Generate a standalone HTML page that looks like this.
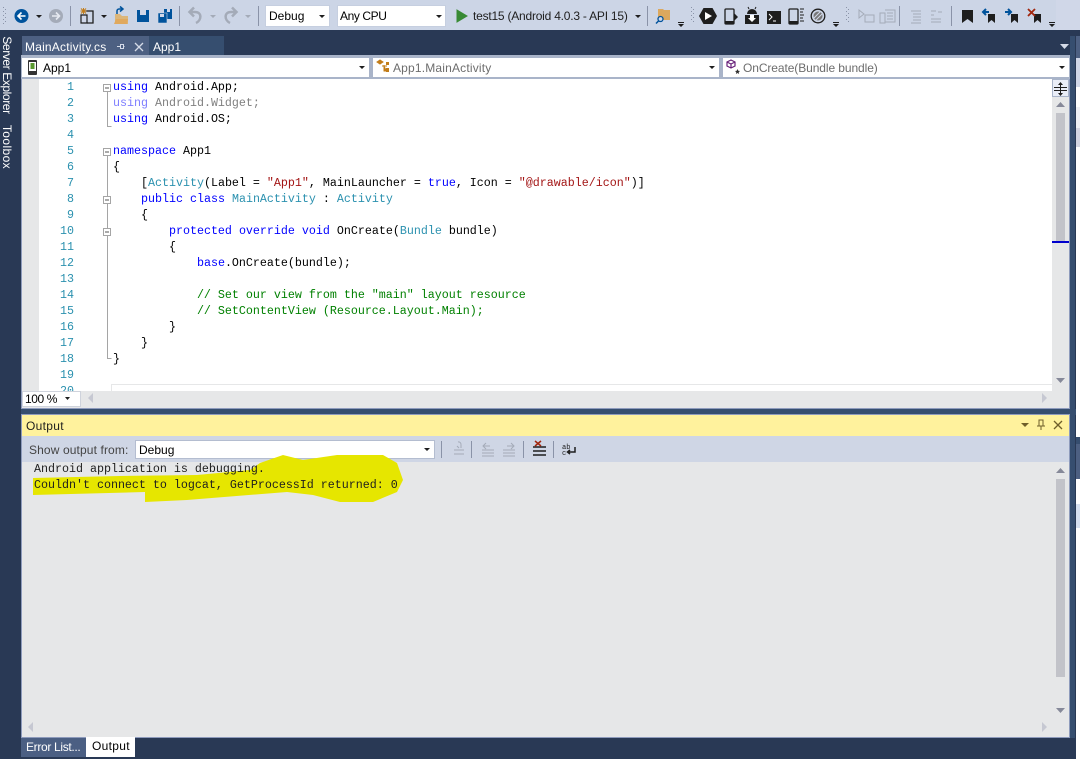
<!DOCTYPE html>
<html><head><meta charset="utf-8"><style>
html,body{margin:0;padding:0;width:1080px;height:759px;overflow:hidden;background:#293955}
*{box-sizing:border-box}
.a{position:absolute}
.t{position:absolute;font:12px/16px "Liberation Sans",sans-serif;color:#1e1e1e;white-space:pre}
.c{position:absolute;left:113px;font:11.67px/16px "Liberation Mono",monospace;color:#000;white-space:pre}
.n{position:absolute;left:40px;width:34px;text-align:right;font:11.67px/16px "Liberation Mono",monospace;color:#2b91af}
.k{color:#0000ff}.y{color:#2b91af}.s{color:#a31515}.g{color:#008000}
.o{position:absolute;left:34px;font:11.67px/15px "Liberation Mono",monospace;color:#1e1e1e;white-space:pre}
svg{position:absolute;left:0;top:0}
</style></head><body>
<div class="a" style="left:0;top:0;width:1080px;height:30px;background:#d0d7e8"></div>
<div class="a" style="left:0;top:0;width:1056px;height:30px;background:#ccd5e6"></div>
<div class="a" style="left:1070px;top:36px;width:5px;height:702px;background:#364e6f"></div>
<div class="a" style="left:22px;top:36px;width:127px;height:19px;background:#4d6082"></div>
<div class="a" style="left:149px;top:36px;width:75px;height:19px;background:#364e6f"></div>
<div class="a" style="left:21px;top:55px;width:1049px;height:25px;background:#a9b4c9"></div>
<div class="a" style="left:22px;top:58px;width:347px;height:19px;background:#fff"></div>
<div class="a" style="left:373px;top:58px;width:346px;height:19px;background:#fff"></div>
<div class="a" style="left:723px;top:58px;width:346px;height:19px;background:#fff"></div>
<div class="a" style="left:21px;top:79px;width:1049px;height:330px;background:#fff;border:1px solid #8e9bbc;border-top:0"></div>
<div class="a" style="left:22px;top:79px;width:17px;height:312px;background:#e6e7e8"></div>
<div class="a" style="left:111px;top:384px;width:941px;height:7px;background:#fff;border-left:1px solid #e6e7e8;border-top:1px solid #e6e7e8"></div>
<div class="a" style="left:1052px;top:79px;width:17px;height:329px;background:#e6e7e8"></div>
<div class="a" style="left:1052px;top:79px;width:17px;height:18px;background:#e9edf7;border:1px solid #a9b4c9"></div>
<div class="a" style="left:1056px;top:113px;width:9px;height:128px;background:#c2c3c9"></div>
<div class="a" style="left:1052px;top:241px;width:17px;height:2px;background:#0000cd"></div>
<div class="a" style="left:22px;top:391px;width:1030px;height:17px;background:#e6e7e8"></div>
<div class="a" style="left:22px;top:391px;width:59px;height:16px;background:#fff;border:1px solid #cfd3dc"></div>
<div class="a" style="left:21px;top:409px;width:1055px;height:6px;background:#364e6f"></div>
<div class="a" style="left:21px;top:414px;width:1049px;height:324px;background:#e6e7e8;border:1px solid #8e9bbc"></div>
<div class="a" style="left:22px;top:415px;width:1047px;height:21px;background:#fff29d"></div>
<div class="a" style="left:22px;top:436px;width:1047px;height:26px;background:#cfd6e5"></div>
<div class="a" style="left:135px;top:440px;width:300px;height:19px;background:#fff;border:1px solid #b4bdd0"></div>
<div class="a" style="left:1056px;top:479px;width:9px;height:198px;background:#c2c3c9"></div>
<div class="a" style="left:21px;top:738px;width:65px;height:19px;background:#4b5f83"></div>
<div class="a" style="left:86px;top:737px;width:49px;height:20px;background:#fff"></div>
<div class="a" style="left:265px;top:5px;width:65px;height:22px;background:#fff;border:1px solid #c6cfe0"></div>
<div class="a" style="left:337px;top:5px;width:109px;height:22px;background:#fff;border:1px solid #c6cfe0"></div>
<div class="a" style="left:1076px;top:36px;width:4px;height:723px;background:#fff"></div>
<div class="a" style="left:1076px;top:36px;width:4px;height:22px;background:#4d6082"></div>
<div class="a" style="left:1076px;top:58px;width:4px;height:29px;background:#d0d7e8"></div>
<div class="a" style="left:1076px;top:107px;width:4px;height:21px;background:#eef0f5"></div>
<div class="a" style="left:1076px;top:128px;width:4px;height:19px;background:#d3d5e2"></div>
<div class="a" style="left:1076px;top:437px;width:4px;height:7px;background:#364e6f"></div>
<div class="a" style="left:1076px;top:444px;width:4px;height:35px;background:#4d6082"></div>
<div class="a" style="left:1076px;top:504px;width:4px;height:24px;background:#d6e0f0"></div>

<svg width="1080" height="759" viewBox="0 0 1080 759">
<!-- highlight -->
<path d="M33 478L120 476 197 475 250 470 260 463 283 455 303 460 337 455 383 455 397 463 403 480 397 492 373 502 340 502 313 495 287 492 187 500 145 502 145 492 33 495Z" fill="#e6e600"/>
<!-- grips -->
<g fill="#8a93a8"><path d="M3 7h1v1H3zM5 9h1v1H5zM3 11h1v1H3zM5 13h1v1H5zM3 15h1v1H3zM5 17h1v1H5zM3 19h1v1H3zM5 21h1v1H5zM3 23h1v1H3z"/>
<path d="M691 7h1v1h-1zM693 9h1v1h-1zM691 11h1v1h-1zM693 13h1v1h-1zM691 15h1v1h-1zM693 17h1v1h-1zM691 19h1v1h-1zM693 21h1v1h-1z"/>
<path d="M846 7h1v1h-1zM848 9h1v1h-1zM846 11h1v1h-1zM848 13h1v1h-1zM846 15h1v1h-1zM848 17h1v1h-1zM846 19h1v1h-1zM848 21h1v1h-1z"/></g>
<!-- separators -->
<g fill="#8a93a8"><rect x="70" y="6" width="1" height="20"/><rect x="179" y="6" width="1" height="20"/><rect x="258" y="6" width="1" height="20"/><rect x="647" y="6" width="1" height="20"/><rect x="899" y="6" width="1" height="20"/><rect x="951" y="6" width="1" height="20"/><rect x="441" y="441" width="1" height="17"/><rect x="471" y="441" width="1" height="17"/><rect x="523" y="441" width="1" height="17"/><rect x="553" y="441" width="1" height="17"/></g>
<!-- back / forward -->
<circle cx="21.500" cy="16" r="7" fill="#00539c"/><path d="M25.500 16h-7M21.500 12.500l-3.500 3.500 3.500 3.500" stroke="#fff" stroke-width="1.600" fill="none"/>
<circle cx="56" cy="16" r="7" fill="#a4abb8"/><path d="M52 16h7M56 12.500l3.500 3.500-3.500 3.500" stroke="#e6e9f0" stroke-width="1.600" fill="none"/>
<!-- carets -->
<g fill="#1e1e1e"><path d="M36 15h6l-3 3zM101 15h6l-3 3zM319 15h6l-3 3zM436 15h6l-3 3zM635 15h6l-3 3zM359 66h6l-3 3zM709 66h6l-3 3zM1059 66h6l-3 3zM65 397h5l-2.500 3zM424 448h6l-3 3z"/>
<path d="M678 22h6v1h-6zM678 24h6l-3 3zM833 22h6v1h-6zM833 24h6l-3 3zM1049 22h6v1h-6zM1049 24h6l-3 3z"/></g>
<g fill="#a4abb8"><path d="M210 15h6l-3 3zM245 15h6l-3 3z"/></g>
<path d="M1060 44h9l-4.500 5z" fill="#d5dbe8"/>
<!-- new project -->
<path d="M85 11h8v12h-6" fill="none" stroke="#1e1e1e" stroke-width="1.300"/><path d="M81 15h6v8h-6z" fill="#d0d7e8" stroke="#1e1e1e" stroke-width="1.200"/><path d="M83.500 8v6M80.500 11h6M81 8.500l5 5M86 8.500l-5 5" stroke="#c27d1a" stroke-width="1"/>
<!-- open -->
<path d="M115 14h5l2 2h6v8h-13z" fill="#dcb67a"/><path d="M114 24l2-5h12l-1 5z" fill="#e0a95e"/><path d="M117 14v-3a2 2 0 0 1 2-2h3M120 6.500l3 2.500-3 2.500" stroke="#00539c" stroke-width="1.500" fill="none"/>
<!-- save -->
<path d="M137 10h12v12h-12z" fill="#00539c"/><rect x="140" y="10" width="6" height="5" fill="#d0d7e8"/>
<path d="M164 9h8v10h-8z" fill="#00539c"/><path d="M158 13h9v10h-9z" fill="#00539c" stroke="#d0d7e8" stroke-width=".6"/><rect x="167" y="9" width="3" height="3" fill="#d0d7e8"/><rect x="160" y="14" width="4" height="3" fill="#d0d7e8"/>
<!-- undo redo -->
<path d="M196 23c6-3 6-11-1-11h-4M194 7.500l-4.500 4.500 4.500 4.500" stroke="#a4abb8" stroke-width="2.500" fill="none"/>
<g transform="translate(426,0) scale(-1,1)"><path d="M196 23c6-3 6-11-1-11h-4M194 7.500l-4.500 4.500 4.500 4.500" stroke="#a4abb8" stroke-width="2.500" fill="none"/></g>
<!-- play -->
<path d="M457 10l10 6-10 6z" fill="#388a34" stroke="#388a34"/>
<!-- folder find -->
<path d="M658 9h5l1 1h6v10h-12z" fill="#dca85e"/><circle cx="660.500" cy="19" r="2.500" fill="#d0d7e8" stroke="#00539c" stroke-width="1.300"/><path d="M658.500 21l-2.500 2.500" stroke="#00539c" stroke-width="1.500"/>
<!-- AVD tools -->
<path d="M703.500 8h9l4.500 8-4.500 8h-9l-4.500-8z" fill="#1e1e1e"/><path d="M705 12l7 4-7 4z" fill="#fff"/>
<rect x="725" y="9" width="9" height="15" rx="1" fill="none" stroke="#1e1e1e" stroke-width="1.300"/><path d="M725 21h9v3h-9z" fill="#1e1e1e"/><path d="M734 13l4 4-4 4z" fill="#1e1e1e"/>
<path d="M745 15h14v9h-14z" fill="#1e1e1e"/><path d="M747 14a5 5 0 0 1 10 0z" fill="#1e1e1e"/><path d="M749 9l-1-2M755 9l1-2" stroke="#1e1e1e"/><path d="M750 15h4v3h2l-4 4-4-4h2z" fill="#fff"/>
<rect x="767" y="11" width="14" height="13" fill="#1e1e1e"/><path d="M769 14l3 3-3 3M773 21h3" stroke="#fff" fill="none"/>
<rect x="789" y="9" width="9" height="15" rx="1" fill="none" stroke="#1e1e1e" stroke-width="1.300"/><path d="M789 21h9v3h-9z" fill="#1e1e1e"/><path d="M800 9h4M800 12h3M800 15h4M800 18h3M800 21h4" stroke="#1e1e1e"/>
<circle cx="818" cy="16" r="6.800" fill="none" stroke="#1e1e1e" stroke-width="1.300"/><circle cx="818" cy="16" r="4.500" fill="#777"/><path d="M814 18l6-6M816 20l6-6" stroke="#d0d7e8"/>
<!-- comment/indent -->
<g stroke="#a4abb8" fill="none"><path d="M859 10l0 8 5-4zM865 15h9v7h-9z"/><path d="M880 13h5v10h-5zM885 10h10v12h-10M887 13h6M887 16h6M887 19h6"/><path d="M911 11h10M913 14h8M913 17h8M913 20h8M911 23h10"/><path d="M931 11h5M931 15h3M931 19h10M931 22h10M938 12h4"/></g>
<!-- bookmarks -->
<path d="M962 10h11v13l-5.500-4-5.500 4z" fill="#1e1e1e"/>
<path d="M988 14h7v9l-3.500-3-3.500 3z" fill="#1e1e1e"/><path d="M983 12h6M986 9l-3 3 3 3" stroke="#00539c" stroke-width="2" fill="none"/>
<path d="M1011 14h7v9l-3.500-3-3.500 3z" fill="#1e1e1e"/><path d="M1005 12h6M1008 9l3 3-3 3" stroke="#00539c" stroke-width="2" fill="none"/>
<path d="M1034 14h7v9l-3.500-3-3.500 3z" fill="#1e1e1e"/><path d="M1028 9l7 7M1035 9l-7 7" stroke="#a1260d" stroke-width="1.800"/>
<!-- tab pin/close -->
<path d="M117 46.500h3M120.500 44.500v4h3v-4zM123.500 46.500h1" stroke="#d5dbe8" fill="none"/>
<path d="M135 43l8 8M143 43l-8 8" stroke="#d5dbe8" stroke-width="1.300"/>
<!-- nav icons -->
<rect x="28" y="60" width="9" height="15" rx="1" fill="#333"/><rect x="29" y="62" width="7" height="9" fill="#fff"/><path d="M30.500 63h4v6h-4z" fill="#5a9a2f"/>
<path d="M377 62l3-2 3 2-3 2zM382 66h5M384 65v6h3" fill="#c27d1a" stroke="#c27d1a"/><rect x="386" y="62" width="3" height="3" fill="#c27d1a"/><rect x="386" y="68" width="3" height="4" fill="#c27d1a"/>
<path d="M731 60l4 2v4l-4 2-4-2v-4zM727 62l4 2 4-2M731 64v4" fill="none" stroke="#68217a" stroke-width="1.200"/><path d="M737.500 69l.8 1.800 1.700.2-1.300 1.200.4 1.800-1.600-1-1.600 1 .4-1.800-1.300-1.200 1.700-.2z" fill="#333"/>
<!-- scrollbars -->
<path d="M1060.500 83v12M1054 87.500h13M1054 90.500h13" stroke="#1e1e1e"/><path d="M1058 85l2.500-3 2.500 3zM1058 93l2.500 3 2.500-3z" fill="#1e1e1e"/>
<g fill="#868999"><path d="M1056 107l4.500-5 4.500 5zM1056 378h9l-4.500 5zM1056 473l4.500-5 4.500 5zM1056 708h9l-4.500 5z"/></g>
<g fill="#c6c8d2"><path d="M93 393v10l-5-5zM1042 393v10l5-5zM33 722v10l-5-5zM1042 722v10l5-5z"/></g>
<!-- folding -->
<g fill="none" stroke="#a5a5a5"><path d="M107.500 92v34.500h4M107.500 156v202.500h4"/><g fill="#fff"><rect x="103.500" y="84.500" width="7" height="7"/><rect x="103.500" y="148.500" width="7" height="7"/><rect x="103.500" y="196.500" width="7" height="7"/><rect x="103.500" y="228.500" width="7" height="7"/></g><path d="M105 88h4M105 152h4M105 200h4M105 232h4" stroke="#555"/></g>
<!-- output title -->
<path d="M1021 423h8l-4 4z" fill="#6f5f2a"/><path d="M1039 420h4v6h-4zM1037 426h8M1041 426v4" stroke="#6f5f2a" fill="none"/><path d="M1054 421l8 8M1062 421l-8 8" stroke="#6f5f2a" stroke-width="1.300"/>
<!-- output toolbar -->
<g stroke="#a4abb8" fill="none"><path d="M454 450h10M454 454h10M458 442a2.500 2.500 0 0 1 3 3v3M457 446l2 2"/><path d="M482 450h12M482 453h12M482 456h12M486 443l-3 3 3 3M483 446h7"/><path d="M503 450h12M503 453h12M503 456h12M511 443l3 3-3 3M514 446h-7"/></g>
<path d="M533 447h13M533 451h13M533 455h13" stroke="#1e1e1e" stroke-width="1.400"/><path d="M535 441l6 5M541 441l-6 5" stroke="#a1260d" stroke-width="1.500"/>
<path d="M575 447v5h-7M570 450l-2.500 2 2.500 2" stroke="#1e1e1e" stroke-width="1.500" fill="none"/>
<text x="562" y="449" font-family="Liberation Mono" font-size="7" fill="#1e1e1e">ab</text><text x="562" y="455" font-family="Liberation Mono" font-size="7" fill="#1e1e1e">c</text>
</svg>

<!-- toolbar text -->
<div class="t" style="left:269px;top:8px;color:#000">Debug</div>
<div class="t" style="left:340px;top:8px;color:#000;letter-spacing:-.4px">Any CPU</div>
<div class="t" style="left:473px;top:8px;letter-spacing:-.22px">test15 (Android 4.0.3 - API 15)</div>
<div class="t" style="left:25px;top:39px;color:#fff;letter-spacing:.2px">MainActivity.cs</div>
<div class="t" style="left:153px;top:39px;color:#fff">App1</div>
<div class="t" style="left:43px;top:60px;color:#000">App1</div>
<div class="t" style="left:393px;top:60px;color:#6d6d6d;letter-spacing:.18px">App1.MainActivity</div>
<div class="t" style="left:743px;top:60px;color:#6d6d6d;letter-spacing:-.09px">OnCreate(Bundle bundle)</div>
<div class="t" style="left:-32px;top:67px;width:78px;text-align:center;color:#fff;transform:rotate(90deg);letter-spacing:-.4px">Server Explorer</div>
<div class="t" style="left:-16px;top:139px;width:46px;text-align:center;color:#fff;transform:rotate(90deg);letter-spacing:.4px">Toolbox</div>

<!-- line numbers -->
<div class="n" style="top:79px">1</div><div class="n" style="top:95px">2</div><div class="n" style="top:111px">3</div><div class="n" style="top:127px">4</div><div class="n" style="top:143px">5</div><div class="n" style="top:159px">6</div><div class="n" style="top:175px">7</div><div class="n" style="top:191px">8</div><div class="n" style="top:207px">9</div><div class="n" style="top:223px">10</div><div class="n" style="top:239px">11</div><div class="n" style="top:255px">12</div><div class="n" style="top:271px">13</div><div class="n" style="top:287px">14</div><div class="n" style="top:303px">15</div><div class="n" style="top:319px">16</div><div class="n" style="top:335px">17</div><div class="n" style="top:351px">18</div><div class="n" style="top:367px">19</div>
<div class="a" style="left:40px;top:384px;width:34px;height:7px;overflow:hidden"><div class="n" style="left:0;top:-1px">20</div></div>

<!-- code -->
<div class="c" style="top:79px"><span class="k">using</span> Android.App;</div>
<div class="c" style="top:95px;color:#808080"><span style="color:#7f7fff">using</span> Android.Widget;</div>
<div class="c" style="top:111px"><span class="k">using</span> Android.OS;</div>
<div class="c" style="top:143px"><span class="k">namespace</span> App1</div>
<div class="c" style="top:159px">{</div>
<div class="c" style="top:175px">    [<span class="y">Activity</span>(Label = <span class="s">"App1"</span>, MainLauncher = <span class="k">true</span>, Icon = <span class="s">"@drawable/icon"</span>)]</div>
<div class="c" style="top:191px">    <span class="k">public</span> <span class="k">class</span> <span class="y">MainActivity</span> : <span class="y">Activity</span></div>
<div class="c" style="top:207px">    {</div>
<div class="c" style="top:223px">        <span class="k">protected</span> <span class="k">override</span> <span class="k">void</span> OnCreate(<span class="y">Bundle</span> bundle)</div>
<div class="c" style="top:239px">        {</div>
<div class="c" style="top:255px">            <span class="k">base</span>.OnCreate(bundle);</div>
<div class="c g" style="top:287px">            // Set our view from the "main" layout resource</div>
<div class="c g" style="top:303px">            // SetContentView (Resource.Layout.Main);</div>
<div class="c" style="top:319px">        }</div>
<div class="c" style="top:335px">    }</div>
<div class="c" style="top:351px">}</div>

<div class="t" style="left:25px;top:391px;color:#000;letter-spacing:-.4px">100 %</div>
<div class="t" style="left:26px;top:418px;color:#1e1e1e;letter-spacing:.3px">Output</div>
<div class="t" style="left:29px;top:442px;color:#444;letter-spacing:.12px">Show output from:</div>
<div class="t" style="left:139px;top:442px;color:#000">Debug</div>
<div class="o" style="top:462px">Android application is debugging.</div>
<div class="o" style="top:478px">Couldn't connect to logcat, GetProcessId returned: 0</div>
<div class="t" style="left:26px;top:739px;color:#fff;letter-spacing:-.33px">Error List...</div>
<div class="t" style="left:92px;top:738px;color:#000;letter-spacing:.3px">Output</div>
</body></html>
